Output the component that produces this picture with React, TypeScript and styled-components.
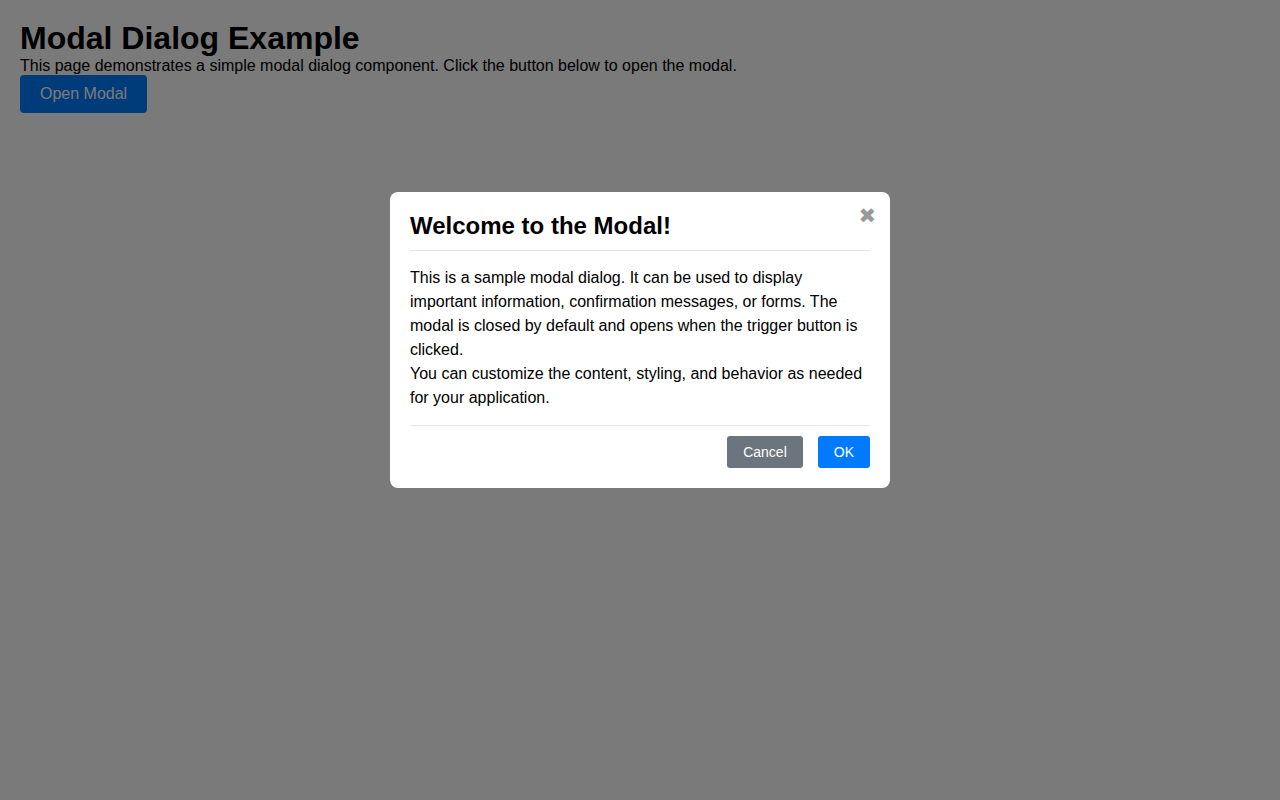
import React from "react";
import styled, { createGlobalStyle } from "styled-components";

const GlobalStyle = createGlobalStyle`
  html, body { margin: 0; padding: 0; background: #ffffff; }
  body {
    font-family: "Liberation Sans", Arial, sans-serif;
    color: #000;
    padding: 20px;
  }
`;

const Title = styled.h1`
  margin: 0;
  font-size: 32px;
  font-weight: bold;
  line-height: 37px;
`;

const Intro = styled.p`
  margin: 0;
  font-size: 16px;
  line-height: 18px;
`;

const TriggerButton = styled.button`
  font-family: "Liberation Sans", Arial, sans-serif;
  font-size: 16px;
  line-height: 18px;
  padding: 10px 20px;
  background: #007bff;
  color: #ffffff;
  border: none;
  border-radius: 4px;
  cursor: pointer;
`;

const Overlay = styled.div`
  position: fixed;
  inset: 0;
  background: rgba(0, 0, 0, 0.52);
  display: flex;
  justify-content: center;
  align-items: flex-start;
  padding-top: 192px;
`;

const Dialog = styled.div`
  position: relative;
  width: 500px;
  box-sizing: border-box;
  background: #ffffff;
  border-radius: 8px;
  padding: 20px;
  display: flex;
  flex-direction: column;
`;

const Header = styled.div`
  padding-bottom: 10px;
  border-bottom: 1px solid #e5e5e5;
`;

const DialogTitle = styled.h2`
  margin: 0;
  font-size: 24px;
  line-height: 28px;
  font-weight: bold;
`;

const CloseButton = styled.button`
  position: absolute;
  top: 12px;
  right: 14px;
  background: none;
  border: none;
  padding: 0;
  font-family: "DejaVu Sans", sans-serif;
  font-size: 21px;
  line-height: 24px;
  color: #999999;
  cursor: pointer;
`;

const Body = styled.div`
  padding: 15px 0;
  font-size: 16px;
  line-height: 24px;
`;

const BodyText = styled.p`
  margin: 0;
`;

const Footer = styled.div`
  border-top: 1px solid #e9e9e9;
  padding-top: 10px;
  display: flex;
  justify-content: flex-end;
  gap: 15px;
`;

const ActionButton = styled.button<{ $variant: "secondary" | "primary" }>`
  font-family: "Liberation Sans", Arial, sans-serif;
  font-size: 14px;
  line-height: 16px;
  height: 32px;
  padding: 8px 16px;
  border: none;
  border-radius: 3px;
  color: #ffffff;
  background: ${(p) => (p.$variant === "primary" ? "#007bff" : "#6c757d")};
  cursor: pointer;
`;

export default function App() {
  return (
    <>
      <GlobalStyle />
      <Title>Modal Dialog Example</Title>
      <Intro>
        This page demonstrates a simple modal dialog component. Click the button below to open the modal.
      </Intro>
      <TriggerButton>Open Modal</TriggerButton>
      <Overlay>
        <Dialog role="dialog">
          <CloseButton aria-label="Close">✖</CloseButton>
          <Header>
            <DialogTitle>Welcome to the Modal!</DialogTitle>
          </Header>
          <Body>
            <BodyText>
              This is a sample modal dialog. It can be used to display important information, confirmation
              messages, or forms. The modal is closed by default and opens when the trigger button is clicked.
            </BodyText>
            <BodyText>
              You can customize the content, styling, and behavior as needed for your application.
            </BodyText>
          </Body>
          <Footer>
            <ActionButton $variant="secondary">Cancel</ActionButton>
            <ActionButton $variant="primary">OK</ActionButton>
          </Footer>
        </Dialog>
      </Overlay>
    </>
  );
}
